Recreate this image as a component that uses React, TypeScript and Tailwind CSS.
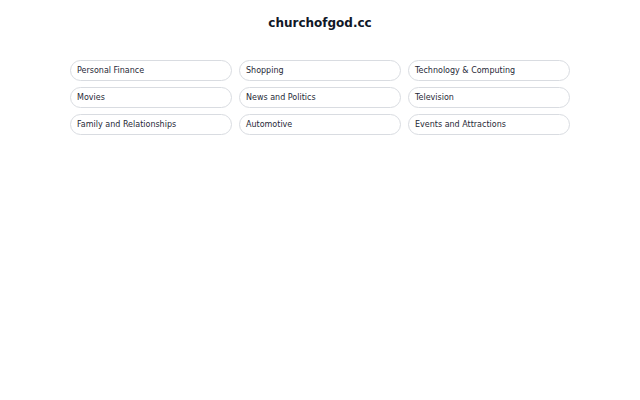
const categories = [
  "Personal Finance",
  "Shopping",
  "Technology & Computing",
  "Movies",
  "News and Politics",
  "Television",
  "Family and Relationships",
  "Automotive",
  "Events and Attractions",
];

export default function App() {
  return (
    <div
      className="min-h-[400px] bg-white"
      style={{ fontFamily: "'DejaVu Sans', sans-serif" }}
    >
      <h1 className="pt-[15px] text-center text-[12px] font-bold leading-[17px] text-[#111827]">
        churchofgod.cc
      </h1>
      <div className="mx-auto mt-[28px] grid w-[500px] grid-cols-3 gap-x-[7px] gap-y-[6px]">
        {categories.map((c) => (
          <div
            key={c}
            className="flex h-[21px] items-center rounded-full border border-[#d9dce1] px-[6px] text-[8px] text-[#1f2937]"
          >
            {c}
          </div>
        ))}
      </div>
    </div>
  );
}
